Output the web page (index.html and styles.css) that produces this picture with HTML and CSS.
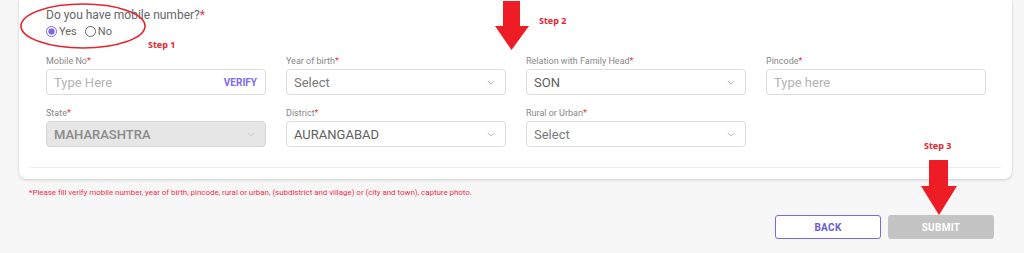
FILE: index.html
```html
<!DOCTYPE html>
<html lang="en">
<head>
  <meta charset="UTF-8" />
  <title>Family member details</title>
  <link rel="stylesheet" href="styles.css">
</head>
<body>

<div class="page">
  <section class="card">
    <div class="card-body">
      <p class="question">Do you have mobile number?<span class="req">*</span></p>
      <div class="radios">
        <label class="radio checked"><span class="dot"></span>Yes</label>
        <label class="radio"><span class="dot"></span>No</label>
      </div>

      <div class="grid">
        <div class="field">
          <label>Mobile No<span class="req">*</span></label>
          <div class="box">
            <span class="placeholder">Type Here</span>
            <span class="verify">VERIFY</span>
          </div>
        </div>
        <div class="field">
          <label>Year of birth<span class="req">*</span></label>
          <div class="box select">
            <span class="value muted">Select</span>
            <svg class="chev" viewBox="0 0 10 6"><path d="M1 1l4 4 4-4" /></svg>
          </div>
        </div>
        <div class="field">
          <label>Relation with Family Head<span class="req">*</span></label>
          <div class="box select">
            <span class="value">SON</span>
            <svg class="chev" viewBox="0 0 10 6"><path d="M1 1l4 4 4-4" /></svg>
          </div>
        </div>
        <div class="field">
          <label>Pincode<span class="req">*</span></label>
          <div class="box">
            <span class="placeholder">Type here</span>
          </div>
        </div>

        <div class="field">
          <label>State<span class="req">*</span></label>
          <div class="box select disabled">
            <span class="value">MAHARASHTRA</span>
            <svg class="chev" viewBox="0 0 10 6"><path d="M1 1l4 4 4-4" /></svg>
          </div>
        </div>
        <div class="field">
          <label>District<span class="req">*</span></label>
          <div class="box select">
            <span class="value">AURANGABAD</span>
            <svg class="chev" viewBox="0 0 10 6"><path d="M1 1l4 4 4-4" /></svg>
          </div>
        </div>
        <div class="field">
          <label>Rural or Urban<span class="req">*</span></label>
          <div class="box select">
            <span class="value muted">Select</span>
            <svg class="chev" viewBox="0 0 10 6"><path d="M1 1l4 4 4-4" /></svg>
          </div>
        </div>
      </div>
    </div>
    <hr class="divider">
  </section>

  <p class="warning">*Please fill verify mobile number, year of birth, pincode, rural or urban, (subdistrict and village) or (city and town), capture photo.</p>

  <div class="actions">
    <button class="btn back">BACK</button>
    <button class="btn submit" disabled>SUBMIT</button>
  </div>

  <!-- annotations drawn over the screenshot -->
  <div class="notes">
    <svg class="ring" width="140" height="52" viewBox="0 0 140 52">
      <ellipse cx="64" cy="25" rx="62" ry="22" />
    </svg>
    <span class="step step1">Step 1</span>
    <span class="step step2">Step 2</span>
    <span class="step step3">Step 3</span>
    <svg class="arrow arrow2" width="36" height="50" viewBox="0 0 36 50">
      <path d="M9 0h17v25h9L17.5 49 1 25h8z" />
    </svg>
    <svg class="arrow arrow3" width="38" height="56" viewBox="0 0 38 56">
      <path d="M9 0h19v26h9L19 55 1 26h8z" />
    </svg>
  </div>
</div>

</body>
</html>
```

FILE: styles.css
```css
* {
  margin: 0; padding: 0; box-sizing: border-box;
}
body {
  font-family: Roboto, 'Liberation Sans', sans-serif;
  background: #f7f7f7;
  color: #555;
  width: 1024px;
  height: 253px;
  overflow: hidden;
}

.page {
  position: relative;
  height: 253px;
  padding: 0 12px 0 19px;
}

.card {
  width: 993px;
  background: #fff;
  border-radius: 0 0 8px 8px;
  box-shadow: 0 1px 3px rgba(0,0,0,0.18);
  padding-bottom: 11px;
}
.card-body {
  padding: 8px 26px 0 27px;
}

.question {
  font-size: 12px;
  line-height: 14px;
  color: #666;
}
.req {
  color: #e53935;
}

.radios {
  display: flex;
  gap: 8px;
  margin-top: 3px;
  height: 13px;
}
.radio {
  display: flex;
  align-items: center;
  gap: 2px;
  font-size: 11px;
  color: #666;
}
.radio .dot {
  width: 11px;
  height: 11px;
  border-radius: 50%;
  border: 1.3px solid #666;
}
.radio.checked .dot {
  border-color: #7b68ee;
  background: radial-gradient(circle, #7b68ee 0 2.8px, #fff 3.4px);
}

.grid {
  display: grid;
  grid-template-columns: repeat(4, 220px);
  column-gap: 20px;
  row-gap: 12px;
  margin-top: 17px;
}
.field label {
  display: block;
  font-size: 9px;
  line-height: 12px;
  color: #888;
  margin-bottom: 2px;
}
.box {
  height: 26px;
  border: 1px solid #dcdcdc;
  border-radius: 4px;
  background: #fff;
  display: flex;
  align-items: center;
  justify-content: space-between;
  padding: 0 8px 0 7px;
  font-size: 13px;
}
.placeholder {
  color: #b4b4b4;
}
.value {
  color: #606060;
}
.value.muted {
  color: #7a7a7a;
}
.verify {
  color: #7b6cf0;
  font-weight: 700;
  font-size: 10px;
}
.chev {
  width: 8px;
  height: 5px;
  margin-right: 2px;
  fill: none;
  stroke: #aaa;
  stroke-width: 1;
}
.box.disabled {
  background: #e6e6e6;
  border-color: #d6d6d6;
}
.box.disabled .value {
  color: #8a8a8a;
  font-weight: 500;
}
.box.disabled .chev {
  stroke: #c4c4c4;
}

.divider {
  border: none;
  border-top: 1px solid #ececec;
  margin: 20px 11px 0;
}

.warning {
  margin: 9px 0 0 10px;
  font-size: 8px;
  letter-spacing: -0.05px;
  color: #f0304a;
}

.actions {
  display: flex;
  justify-content: flex-end;
  gap: 7px;
  margin: 18px 18px 0 0;
}
.btn {
  width: 106px;
  height: 24px;
  border-radius: 3px;
  font-family: Roboto, 'Liberation Sans', sans-serif;
  font-weight: 700;
  font-size: 10px;
  letter-spacing: 0.3px;
}
.btn.back {
  background: #fff;
  border: 1.5px solid #7b68ee;
  color: #6a5ad8;
}
.btn.submit {
  background: #c4c4c4;
  border: none;
  color: #fff;
}

/* annotations */
.notes {
  position: absolute;
  inset: 0;
  pointer-events: none;
}
.ring {
  position: absolute;
  left: 19px;
  top: 1px;
  fill: none;
  stroke: #e3262e;
  stroke-width: 1.6;
}
.step {
  position: absolute;
  font-family: 'Open Sans', sans-serif;
  font-weight: 700;
  font-size: 9px;
  color: #e8232b;
}
.step1 { left: 148px; top: 38px; }
.step2 { left: 539px; top: 14px; }
.step3 { left: 924px; top: 139px; }
.arrow {
  position: absolute;
  fill: #ee1c25;
}
.arrow2 { left: 494px; top: 1px; }
.arrow3 { left: 920px; top: 160px; }
```
